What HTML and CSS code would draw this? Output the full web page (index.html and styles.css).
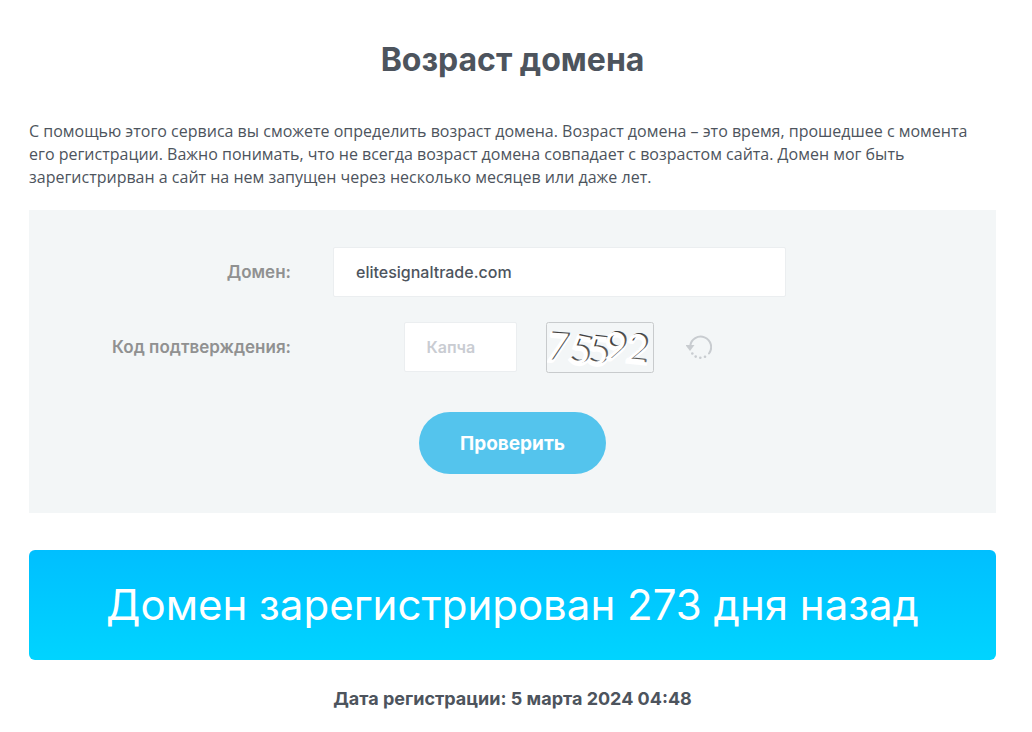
FILE: index.html
```html
<!DOCTYPE html>
<html lang="ru">
<head>
<meta charset="utf-8">
<meta name="viewport" content="width=device-width, initial-scale=1">
<title>Возраст домена</title>
<link rel="stylesheet" href="styles.css">
</head>
<body>
<main class="page">
  <h1 class="title">Возраст домена</h1>
  <p class="intro">С помощью этого сервиса вы сможете определить возраст домена. Возраст домена – это время, прошедшее с момента его регистрации. Важно понимать, что не всегда возраст домена совпадает с возрастом сайта. Домен мог быть зарегистрирван а сайт на нем запущен через несколько месяцев или даже лет.</p>
  <form class="panel">
    <div class="row">
      <label class="label" for="domain">Домен:</label>
      <input class="input" id="domain" type="text" value="elitesignaltrade.com">
    </div>
    <div class="row">
      <label class="label" for="code">Код подтверждения:</label>
      <div class="captcha">
        <input class="input input-code" id="code" type="text" placeholder="Капча">
        <svg class="captcha-image" viewBox="0 0 108 51" role="img" aria-label="Код">
          <defs>
            <linearGradient id="ink" x1="0" y1="0" x2="1" y2="1">
              <stop offset="0" stop-color="#222"/>
              <stop offset="1" stop-color="#777"/>
            </linearGradient>
            <g id="digits">
              <text transform="translate(-1 37) rotate(4)">7</text>
              <text class="upright" transform="translate(21 38) rotate(12)">5</text>
              <text class="upright" transform="translate(40 40) rotate(6)">5</text>
              <text class="upright" transform="translate(55 34) rotate(14)">9</text>
              <text class="upright" transform="translate(79 38) rotate(6)">2</text>
            </g>
          </defs>
          <use href="#digits" class="digits-halo" x="0" y="2"/>
          <use href="#digits" class="digits-shade" x="1" y="0"/>
          <use href="#digits" class="digits-face" x="-1" y="1"/>
          <rect class="captcha-frame" x="0.5" y="0.5" width="107" height="50" rx="2"/>
        </svg>
        <button class="refresh" type="button" aria-label="Обновить код">
          <svg viewBox="0 0 26 26" width="26" height="26">
            <path d="M4.200 12A10.500 10.500 0 1 1 23 19.500" fill="none" stroke="#c8ccd0" stroke-width="2" stroke-linecap="round"/>
            <path d="M-0.500 11h9L4 17z" fill="#c8ccd0"/>
            <g fill="#c8ccd0"><circle cx="6.300" cy="19.500" r="1.300"/><circle cx="9.700" cy="22.600" r="1.300"/><circle cx="14.300" cy="23.800" r="1.300"/><circle cx="19" cy="22.800" r="1.300"/></g>
          </svg>
        </button>
      </div>
    </div>
    <button class="submit" type="submit">Проверить</button>
  </form>
  <div class="result">Домен зарегистрирован 273 дня назад</div>
  <p class="date">Дата регистрации: 5 марта 2024 04:48</p>
</main>
</body>
</html>
```
FILE: styles.css
```css
* { box-sizing: border-box; }

body {
  margin: 0;
  background: #fff;
  color: #4d545d;
  font-family: Inter, "Open Sans", sans-serif;
  font-size: 16px;
}

.page { padding: 40px 36px 20px 29px; }

.title {
  margin: 0 0 40px;
  font-size: 32px;
  line-height: 40px;
  font-weight: 700;
  text-align: center;
}

.intro {
  margin: 0 0 21px;
  font-family: "Open Sans", sans-serif;
  font-weight: 500;
  line-height: 23px;
}

.panel {
  display: flex;
  flex-direction: column;
  gap: 25px;
  padding: 37px 0 39px;
  background: #f3f6f7;
}

.row {
  display: grid;
  grid-template-columns: minmax(0, 262px) minmax(0, 453px);
  column-gap: 42px;
  align-items: center;
}

.label {
  color: #909191;
  font-size: 17px;
  line-height: 20px;
  font-weight: 600;
  text-align: right;
}

.input {
  width: 100%;
  height: 50px;
  padding: 0 22px;
  border: 1px solid #ebeef0;
  border-radius: 2px;
  background: #fff;
  color: #4d545d;
  font: 500 16px Inter, sans-serif;
}

.input::placeholder { color: #c9ccd2; font-weight: 600; opacity: 1; }

.captcha {
  display: flex;
  justify-content: center;
  align-items: center;
  height: 50px;
  padding-right: 4px;
}

.input-code { width: 113px; }

.captcha-image { width: 108px; height: 51px; margin: 0 32px 0 29px; }

.captcha-frame { fill: none; stroke: #c8cbcd; }

.captcha-image text {
  font-family: Lato, sans-serif;
  font-size: 39px;
  font-style: italic;
}

.captcha-image .upright { font-style: normal; }

.digits-halo { fill: #fff; stroke: #fff; stroke-width: 3px; }
.digits-shade { fill: url(#ink); }
.digits-face { fill: #fff; }

.refresh {
  display: flex;
  padding: 0;
  border: 0;
  background: none;
}

.submit {
  align-self: center;
  height: 62px;
  margin-top: 15px;
  padding: 0 41px;
  border: 0;
  border-radius: 31px;
  background: #54c4ed;
  color: #fff;
  font: 700 19px Inter, sans-serif;
}

.result {
  margin-top: 37px;
  padding: 30px 20px;
  border-radius: 6px;
  background: linear-gradient(#00bfff, #00d4ff);
  color: #fff;
  font-size: 42px;
  line-height: 50px;
  text-align: center;
}

.date {
  margin: 27px 0 0;
  font-size: 18px;
  line-height: 24px;
  font-weight: 700;
  text-align: center;
}
```
